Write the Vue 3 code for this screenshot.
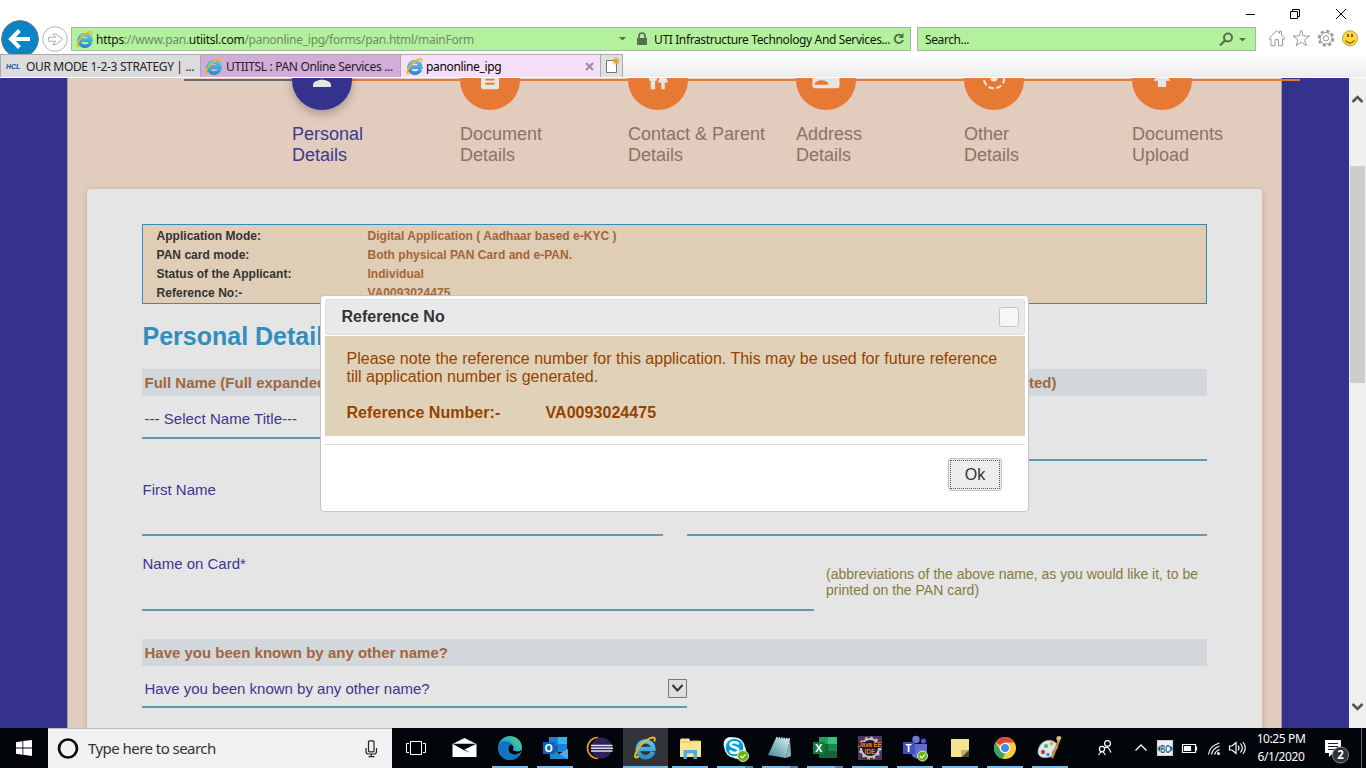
<script setup>
const steps = [
  { id: 'personal', lines: ['Personal', 'Details'], active: true },
  { id: 'document', lines: ['Document', 'Details'] },
  { id: 'contact', lines: ['Contact & Parent', 'Details'] },
  { id: 'address', lines: ['Address', 'Details'] },
  { id: 'other', lines: ['Other', 'Details'] },
  { id: 'upload', lines: ['Documents', 'Upload'] }
]
const summary = [
  ['Application Mode:', 'Digital Application ( Aadhaar based e-KYC )'],
  ['PAN card mode:', 'Both physical PAN Card and e-PAN.'],
  ['Status of the Applicant:', 'Individual'],
  ['Reference No:-', 'VA0093024475']
]
const tasks = [
  { id: 'mail' },
  { id: 'edge', run: true },
  { id: 'outlook', run: true },
  { id: 'eclipse' },
  { id: 'ie', run: true, active: true },
  { id: 'explorer', run: true },
  { id: 'skype', run: true, stack: true },
  { id: 'notepad', run: true, stack: true },
  { id: 'excel', run: true, stack: true },
  { id: 'java', run: true },
  { id: 'teams', run: true },
  { id: 'sticky', run: true },
  { id: 'chrome', run: true },
  { id: 'paint', run: true }
]
</script>

<template>
  <div class="screen">
    <svg class="defs" width="0" height="0">
      <defs>
        <linearGradient id="edgeg" x1="0" y1="1" x2="1" y2="0"><stop offset="0" stop-color="#0c5bb5" /><stop offset=".5" stop-color="#1fa3dc" /><stop offset="1" stop-color="#5fdc5a" /></linearGradient>
        <linearGradient id="noteg" x1="0" y1="1" x2="1" y2="0"><stop offset="0" stop-color="#3f8796" /><stop offset="1" stop-color="#d3f0f4" /></linearGradient>
        <linearGradient id="ieg" x1="0" y1="0" x2="0" y2="1"><stop offset="0" stop-color="#62c6ee" /><stop offset="1" stop-color="#2b8fcb" /></linearGradient>
        <symbol id="ie" viewBox="0 0 24 24">
          <path d="M20.3 16.2A8.2 8.2 0 1 1 20.8 13H6" fill="none" stroke="#2f86bd" stroke-width="4.800" />
          <path d="M20.3 16.2A8.2 8.2 0 1 1 20.8 13H6" fill="none" stroke="url(#ieg)" stroke-width="4" />
          <path d="M5.500 20.500C1.800 23.600 .6 21.500 2.500 17C5 11 11.500 4 17.500 1.700C22 0 23 1.700 21.700 5" fill="none" stroke="#f2b90f" stroke-width="2.100" />
        </symbol>
      </defs>
    </svg>

    <header class="browser">
      <div class="titlebar">
        <svg width="120" height="27" viewBox="1246 0 120 27" fill="none" stroke="#000" stroke-width="1">
          <path d="M1245 14.500h10M1290.500 11.500h7v7h-7zM1292.500 11.500v-2h7v7h-2M1336 9l10 10M1346 9l-10 10" />
        </svg>
      </div>
      <div class="nav">
        <svg class="navbtns" width="71" height="34" viewBox="0 20 71 34">
          <circle cx="20" cy="39" r="18.300" fill="#0a84c4" stroke="#5f6f78" />
          <path d="M30 39H12M19.500 30.500L11 39l8.500 8.500" fill="none" stroke="#fff" stroke-width="4" />
          <circle cx="55" cy="39" r="12.300" fill="#fff" stroke="#b4b4b4" />
          <path d="M48.500 37.200h7.300l-3-3.200h3.200l6.500 5.200-6.500 5.300h-3.200l3-3.300h-7.300z" fill="none" stroke="#b0b0b0" />
        </svg>
        <div class="address">
          <svg width="17" height="17"><use href="#ie" width="17" height="17" /></svg>
          <span class="url"><b>https</b>://www.pan.<b>utiitsl.com</b>/panonline_ipg/forms/pan.html/mainForm</span>
          <svg class="lock" width="34" height="20" viewBox="0 0 34 20" fill="#56704f">
            <path d="M1 8h7l-3.500 3.500zM19 9h10v7H19z" /><path d="M21 9V7a3 3 0 0 1 6 0v2" fill="none" stroke="#56704f" stroke-width="1.700" />
          </svg>
          <span class="cert">UTI Infrastructure Technology And Services...</span>
          <svg class="reload" width="12" height="14" viewBox="0 0 12 14"><path d="M9 4A4.200 4.200 0 1 0 10 8" fill="none" stroke="#56704f" stroke-width="2" /><path d="M10.500 .8v5.200H5.300z" fill="#56704f" /></svg>
        </div>
        <div class="search">
          <span>Search...</span>
          <svg width="30" height="18" viewBox="0 0 30 18"><circle cx="11" cy="7.500" r="4" fill="none" stroke="#56704f" stroke-width="2" /><path d="M8 10.500L3 15.500" stroke="#56704f" stroke-width="2.300" /><path d="M22 8h7l-3.500 3.500z" fill="#56704f" /></svg>
        </div>
        <svg class="tools" width="96" height="20" viewBox="1268 28 96 20" fill="none" stroke="#999" stroke-width="1">
          <path d="M1269 38.500l7.700-8 2.800 2.700v-2h2v4l3.500 3.300-1.400 1.200-1.100-1v7h-4v-6h-3.500v6h-4v-7l-1 1z" />
          <path d="M1301.300 30l2.100 5.900 6.100.1-4.900 3.800 1.800 5.900-5.100-3.500-5.100 3.500 1.800-5.900-4.900-3.800 6.100-.1z" />
          <circle cx="1326" cy="38.300" r="7.200" stroke-width="2.200" stroke-dasharray="3.200 2.450" /><circle cx="1326" cy="38.300" r="5.800" fill="#fff" /><circle cx="1326" cy="38.300" r="2.700" />
          <circle cx="1350" cy="38.300" r="7.500" fill="#ffd93b" stroke="#b79f52" /><path d="M1345.500 40.500q4.500 5 9 0" stroke="#8c6d15" stroke-width="1.300" /><path d="M1348 34v3M1352 34v3" stroke="#7b6013" stroke-width="2" />
        </svg>
      </div>
      <div class="tabs">
        <div class="tab first"><span class="hcl">HCL</span><span class="t1">OUR MODE 1-2-3 STRATEGY | ...</span></div>
        <div class="tab second"><svg width="17" height="17"><use href="#ie" width="17" height="17" /></svg><span class="t2">UTIITSL : PAN Online Services ...</span></div>
        <div class="tab current"><svg width="17" height="17"><use href="#ie" width="17" height="17" /></svg><span class="t3">panonline_ipg</span>
          <svg class="close" width="9" height="9" viewBox="0 0 9 9"><path d="M1 1l7 7M8 1L1 8" stroke="#9b8ca0" stroke-width="2" /></svg></div>
        <div class="tab new"><svg width="18" height="20" viewBox="0 0 18 20"><path d="M3.500 4.500h10v12h-10z" fill="#fff" stroke="#777" /><circle cx="13" cy="5" r="2.500" fill="#ffb52a" /><path d="M13 1v8M9 5h8M10.200 2.200l5.600 5.600M15.800 2.200l-5.600 5.600" stroke="#d99a2d" stroke-width=".9" /></svg></div>
      </div>
    </header>

    <main class="page">
      <section class="sheet">
        <div class="track"></div>
        <div class="steps">
          <div v-for="s in steps" :key="s.id" class="step" :class="{ active: s.active }">
            <svg width="60" height="60" viewBox="0 0 60 60">
              <circle class="disc" cx="30" cy="30" r="30" />
              <g fill="#e5e5e5" transform="translate(16.500 14.500) scale(1.125)">
                <path v-if="s.id === 'personal'" d="M12 12.300a4 4 0 1 0 0-8 4 4 0 0 0 0 8zm0 1.200c-2.700 0-8 1.500-8 4.500v2h16v-2c0-3-5.300-4.500-8-4.500z" />
                <path v-if="s.id === 'document'" d="M14 2H6a2 2 0 0 0-2 2v16c0 1.100.9 2 2 2h12a2 2 0 0 0 2-2V8zM16 18H8v-1.700h8zm0-3.700H8V12.600h8z" />
                <path v-if="s.id === 'contact'" d="M5.500 22v-7.500H4V9c0-1.100.9-2 2-2h3c1.100 0 2 .9 2 2v5.500H9.500V22zM18 22v-6h3l-2.540-7.630A2 2 0 0 0 16.560 7h-.12c-.86 0-1.630.55-1.900 1.370L12 16h3v6z" />
                <path v-if="s.id === 'address'" fill-rule="evenodd" d="M22 3H2a2 2 0 0 0-2 2v14c0 1.100.9 2 2 2h20a2 2 0 0 0 2-2V5a2 2 0 0 0-2-2zM2 18v-1c0-2 4-3.100 6-3.100s6 1.100 6 3.100v1zM14 6h8v6h-8z" />
                <g v-if="s.id === 'other'"><circle cx="12" cy="12" r="9.200" fill="none" stroke="#e5e5e5" stroke-width="1.800" stroke-dasharray="5 2.220" /><circle cx="12" cy="12" r="3.200" /></g>
                <path v-if="s.id === 'upload'" d="M8.300 20h7.400v-5.500h4L12 5.500 4.300 14.500h4z" />
              </g>
            </svg>
            <div class="caption"><div v-for="l in s.lines" :key="l">{{ l }}</div></div>
          </div>
        </div>

        <div class="card">
          <div class="summary">
            <div v-for="r in summary" :key="r[0]" class="row"><span>{{ r[0] }}</span><span class="val">{{ r[1] }}</span></div>
          </div>
          <h1>Personal Details</h1>
          <div class="band"><span class="spread"><span>Full Name (Full expanded name:</span><span>initials are not permitted)</span></span></div>
          <div class="pair r1"><div class="field title">--- Select Name Title---</div><div class="field"></div></div>
          <div class="pair r2"><div class="field">First Name</div><div class="field"></div></div>
          <div class="pair r3"><div class="field">Name on Card*</div><div class="hint">(abbreviations of the above name, as you would like it, to be<br>printed on the PAN card)</div></div>
          <div class="band known">Have you been known by any other name?</div>
          <div class="field drop"><span>Have you been known by any other name?</span>
            <svg width="19" height="19" viewBox="0 0 19 19"><path d="M.5.5h18v18H.5z" fill="#dedede" stroke="#777" /><path d="M4.500 6l5 5.500 5-5.500" fill="none" stroke="#333" stroke-width="2" /></svg>
          </div>
        </div>
      </section>

      <aside class="scroll">
        <svg width="17" height="88" viewBox="0 0 17 88"><path d="M3.500 24l5-5 5 5" fill="none" stroke="#555" stroke-width="2.600" /></svg>
        <div class="thumb"></div>
        <svg class="down" width="17" height="40" viewBox="0 0 17 40"><path d="M3.500 15l5 5 5-5" fill="none" stroke="#555" stroke-width="2.600" /></svg>
      </aside>

      <div class="dialog">
        <div class="dhead"><span>Reference No</span><i></i></div>
        <div class="dbody">
          <p>Please note the reference number for this application. This may be used for future reference<br>till application number is generated.</p>
          <p class="ref"><span>Reference Number:-</span><span>VA0093024475</span></p>
        </div>
        <div class="dfoot"><button><span>Ok</span></button></div>
      </div>
    </main>

    <footer class="taskbar">
      <div class="start"><svg width="16" height="16" viewBox="0 0 16 16" fill="#fff"><path d="M0 2.200L6.500 1.200V7.500H0zM7.300 1.100L16 0v7.500H7.300zM0 8.400h6.500v6.300L0 13.800zM7.300 8.400H16V16l-8.700-1.200z" /></svg></div>
      <div class="find">
        <svg width="22" height="22" viewBox="0 0 22 22"><circle cx="11" cy="10.500" r="9" fill="none" stroke="#0a0a0a" stroke-width="2.700" /></svg>
        <span>Type here to search</span>
        <svg width="13" height="18" viewBox="0 0 13 18" fill="none" stroke="#222" stroke-width="1.200"><rect x="3.500" y=".8" width="5.500" height="11" rx="1" /><path d="M1 8v3.500q0 2.500 2.500 2.500h5.500q2.500 0 2.500-2.500V8M6.300 14v2.500M3.500 16.700h6" /></svg>
      </div>
      <div class="view"><svg width="20" height="16" viewBox="0 0 20 16" fill="none" stroke="#fff"><path d="M4.500 1.500h11v13h-11zM3 3.500H.5v9H3M17 3.500h2.500v9H17" /></svg></div>
      <div v-for="t in tasks" :key="t.id" class="task" :class="{ run: t.run, active: t.active, stack: t.stack }">
        <svg width="36" height="38" viewBox="0 0 36 38">
          <g v-if="t.id === 'mail'" transform="translate(-.5 0)"><path d="M6 16L18 10l12 6v13H6z" fill="#fff" /><path d="M6 15.800h24L18 21.500l5.500 3.200L17 22z" fill="#03060b" /></g>
          <g v-if="t.id === 'edge'"><circle cx="18" cy="20" r="12" fill="url(#edgeg)" /><path d="M6.200 18C9 11 20 12 21 19c-3-2-6 0-6 3 0 5 7 7 13 4C24 34 10 35 6.500 23z" fill="#1471c4" /><path d="M19 16.500c4 2 2 4 2 5.500 2 2 7 2 9-.5-1 4-4 5-7 5.200-5-.7-7-2.500-6.500-6 .2-2 .5-3.600 2.500-4.200z" fill="#03060b" /></g>
          <g v-if="t.id === 'outlook'"><path d="M12 9h18v15H12z" fill="#1a83d2" /><path d="M21 9h9v7h-9z" fill="#35b3ef" /><path d="M12 17h9v8h-9z" fill="#1263af" /><path d="M13 31V21l9 5 9-5v10z" fill="#4aaee8" /><path d="M13 21l18 10H13z" fill="#2287d2" /><path d="M6 14h12v12H6z" fill="#0c62b9" /><text x="7.500" y="24" fill="#fff" class="glyph">O</text></g>
          <g v-if="t.id === 'eclipse'"><path d="M16 9.500a10.500 10.500 0 0 0 0 21" fill="none" stroke="#ef9127" stroke-width="1.700" /><circle cx="19.500" cy="20" r="10.500" fill="#2e2358" /><path d="M9 17.500h21.500M9 20.200h22M9 22.900h21.500" stroke="#e6e3ee" stroke-width="1.500" /></g>
          <g v-if="t.id === 'ie'"><use href="#ie" x="6.500" y="8" width="23" height="24" /></g>
          <g v-if="t.id === 'explorer'"><path d="M8 12l1-1.500h8l1.500 2.500H29v16H8z" fill="#ffe391" /><path d="M8 14h11M20 13h8" stroke="#efbd4a" stroke-width="1" /><path d="M11.500 22h13.500v9h-3.500v-5.500h-6.500V31h-3.500z" fill="#45afe2" /></g>
          <g v-if="t.id === 'skype'"><circle cx="13.500" cy="16" r="7" fill="#e9f8ff" /><circle cx="21" cy="23" r="8" fill="#e9f8ff" /><circle cx="17.500" cy="19.500" r="9.500" fill="#009edb" stroke="#e9f8ff" stroke-width="1.400" /><path d="M21.500 16.500c-1-3-8-3-8 0 0 3.500 8 2 8 5.800 0 3.500-7.500 3.500-8.500 0" fill="none" stroke="#fff" stroke-width="2.500" /><circle cx="26" cy="28" r="5.500" fill="#6bb112" stroke="#d9ecc4" /><path d="M23.500 28l1.800 1.900 3.200-3.500" fill="none" stroke="#fff" stroke-width="1.300" /></g>
          <g v-if="t.id === 'notepad'"><path d="M14 10l14 1-4 19-18-3z" fill="url(#noteg)" /><path d="M28 11l1 17-5 2z" fill="#96b0b5" /><path d="M14 10l14 1" stroke="#c9d4d4" stroke-width="2" stroke-dasharray="1.500 1" /></g>
          <g v-if="t.id === 'excel'"><path d="M12 9h18v21H12z" fill="#18894c" /><path d="M12 9h9v7h-9z" fill="#20a063" /><path d="M21 9h9v7h-9z" fill="#34c381" /><path d="M21 23h9v7h-9zM12 16h9v14h-9z" fill="#17613b" /><path d="M6 14h12v12H6z" fill="#127a43" /><text x="8.300" y="24.300" fill="#fff" class="glyph">X</text></g>
          <g v-if="t.id === 'java'"><path d="M6 8h24v24H6z" fill="#51345f" /><circle cx="18" cy="20" r="9" fill="#231b22" stroke="#c8c8c8" stroke-width="2" /><circle cx="18" cy="20" r="10.500" fill="none" stroke="#c8c8c8" stroke-width="1.800" stroke-dasharray="2.500 3" /><path d="M7 14h22v6H7z" fill="#231b22" /><text x="6.500" y="19.300" class="java" textLength="23" lengthAdjust="spacingAndGlyphs">Java EE</text><text x="12.500" y="25.800" class="java" textLength="11" lengthAdjust="spacingAndGlyphs">IDE</text></g>
          <g v-if="t.id === 'teams'"><circle cx="19" cy="11.500" r="3.700" fill="#6f78d8" /><circle cx="26.500" cy="13" r="2.600" fill="#5059c9" /><path d="M14 16h16v9q-1 4-5 4-3 3-7 1-4-2-4-6z" fill="#626bd0" /><path d="M6 14h12v12H6z" fill="#454fb8" /><text x="8.500" y="24.300" fill="#fff" class="glyph">T</text><circle cx="25.500" cy="28" r="5" fill="#6bb112" stroke="#d9ecc4" /><path d="M23 28l1.800 1.900 3.200-3.500" fill="none" stroke="#fff" stroke-width="1.300" /></g>
          <g v-if="t.id === 'sticky'"><path d="M9 11h18v11l-7 7H9z" fill="#f2e58f" /><path d="M27 21.500V29h-7.500z" fill="#4b4734" /><path d="M19 22h8l-7.500 7z" fill="#bdb168" /></g>
          <g v-if="t.id === 'chrome'"><circle cx="18" cy="20" r="11" fill="#f7cd38" /><path d="M18 20L8.500 14.500A11 11 0 0 1 27.500 14.500H18z" fill="#db4a3a" /><path d="M8.500 14.500L13.500 23l4.500 3-2.500 4.700A11 11 0 0 1 8.500 14.500z" fill="#36a65b" /><circle cx="18" cy="20" r="5.300" fill="#fff" /><circle cx="18" cy="20" r="4" fill="#4688f1" /></g>
          <g v-if="t.id === 'paint'"><path d="M6 24c0-8 8-14 15-11 6 3 6 8 2 9-3 1-3 3-2 5-4 4-15 4-15-3z" fill="#d5e9f3" stroke="#8eb4c8" stroke-width=".6" /><circle cx="11" cy="24" r="2.200" fill="#d43c31" /><circle cx="14" cy="18" r="2" fill="#56b13e" /><circle cx="19.500" cy="15.500" r="2" fill="#e8b42e" /><circle cx="16" cy="26.500" r="1.700" fill="#3f82d4" /><path d="M27 12l-7 18" stroke="#cc8a38" stroke-width="2.500" /><path d="M24.500 9q3-2 5 .5l-2 4-3-1.500z" fill="#dbb987" /></g>
        </svg>
      </div>
      <div class="tray">
        <svg width="162" height="40" viewBox="1090 728 162 40" fill="none" stroke="#fff" stroke-width="1.200">
          <circle cx="1107.500" cy="743.500" r="2.900" /><circle cx="1102" cy="749" r="2.600" /><path d="M1105 748q3-3 6 4.500M1098.500 755q3.500-6.500 7 0" />
          <path d="M1135.500 750.500l5.500-5.500 5.500 5.500" stroke-width="1.400" />
          <path d="M1157.500 740.500h15v15h-15z" fill="#f0f0f0" stroke="#ccc" />
          <text x="1160.500" y="753" class="abc" textLength="9.500" lengthAdjust="spacingAndGlyphs">BC</text><path d="M1160 746l-2 2.700 2 2.700zM1170.500 746l2 2.700-2 2.700z" stroke="#176487" stroke-width=".8" fill="#176487" />
          <path d="M1182.500 744.500h13v8h-13zM1196.500 746.500v4" /><path d="M1184.500 746.500h6v4h-6z" fill="#fff" />
          <path d="M1208.500 754.500q1-8.500 11-11.500M1211.500 754.500q1-6 8-8.500M1214.500 754.500q1-3.500 5-5" /><circle cx="1218.500" cy="753.500" r="1.500" fill="#fff" stroke="none" />
          <path d="M1229.500 746h2.500l4-3.500v11l-4-3.500h-2.500zM1238 745.500q2 2.500 0 5M1240.500 743.500q3.500 4.500 0 9M1243 742q4.500 6 0 12" />
        </svg>
        <div class="clock"><span class="tm">10:25 PM</span><span class="dt">6/1/2020</span></div>
        <svg width="56" height="40" viewBox="1310 728 56 40"><path d="M1325 740h16v13h-8l-4 4v-4h-4z" fill="#fff" /><path d="M1328 743.500h10M1328 746.500h10M1328 749.500h7" stroke="#222" /><circle cx="1340.500" cy="755" r="8" fill="#303134" stroke="#8a8a8a" /><text x="1337.300" y="759.300" class="badge">2</text><path d="M1361.500 728v40" stroke="#666" /></svg>
      </div>
    </footer>
  </div>
</template>

<style>
body { margin: 0; overflow: hidden; }
</style>
<style scoped>
.screen { width: 1366px; height: 768px; display: grid; grid-template-rows: 78px 650px 40px; overflow: hidden; font-family: "Liberation Sans", Arial, sans-serif; position: relative; background: #fff; }
.defs { position: absolute; }
svg { display: block; flex: none; }
span { white-space: nowrap; }
.browser { display: grid; grid-template-rows: 27px 27px 24px; font-family: "Noto Sans", sans-serif; font-size: 12px; background: #fff; min-width: 0; }
.titlebar { display: flex; justify-content: flex-end; }
.nav { display: flex; align-items: flex-start; min-width: 0; }
.navbtns { margin-top: -7px; }
.address, .search { box-sizing: border-box; height: 24px; border: 1px solid #aab3a8; background: #b3f19d; display: flex; align-items: center; }
.address { width: 840px; padding-left: 4px; }
.url { color: #6f8a68; margin-left: 3px; width: 522px; letter-spacing: -0.27px; }
.url b { font-weight: 400; color: #101510; }
.cert { margin-left: 2px; width: 236px; color: #101510; letter-spacing: -0.37px; }
.reload { margin-left: 3px; }
.search { width: 339px; margin-left: 6px; padding: 0 8px 0 7px; justify-content: space-between; color: #101510; letter-spacing: -.4px; }
.tools { margin: 1px 0 0 12px; }
.tabs { display: flex; background: linear-gradient(#fff, #ececec); border-bottom: 1px solid #fff; box-sizing: border-box; }
.tab { box-sizing: border-box; border-top: 1px solid #aaa; border-left: 1px solid #aaa; height: 23px; display: flex; align-items: center; color: #222; }
.first { width: 200px; background: #dcdcdc; padding-left: 5px; }
.hcl { font: italic bold 7px "Liberation Sans", sans-serif; color: #1b55a0; width: 20px; }
.second { width: 200px; background: #d4acda; padding-left: 4px; gap: 4px; }
.current { width: 200px; background: #f6dff9; padding-left: 5px; gap: 3px; color: #000; }
.close { margin: 0 6px 0 auto; }
.new { width: 23px; background: #e0e0e0; border-right: 1px solid #aaa; padding-left: 2px; }
.t1, .t2 { letter-spacing: -.34px; }
.t3 { letter-spacing: -.35px; }
.page { position: relative; display: flex; overflow: hidden; background: #34328d; }
.sheet { position: relative; box-sizing: border-box; margin-left: 67px; width: 1215px; height: 650px; background: #e2ccbe; border-left: 1px solid #a399a8; border-right: 1px solid #a399a8; }
.track { position: absolute; top: 1px; left: 116px; width: 1116px; height: 2px; background: linear-gradient(90deg, #6b6870 108px, #e67a34 108px); }
.steps { position: relative; display: flex; margin-top: -28px; padding-left: 224px; height: 139px; }
.step { flex: none; width: 168px; color: #8b7265; font-size: 18px; line-height: 21px; }
.step:last-child { width: 120px; }
.step svg { overflow: visible; }
.disc { fill: #e67a34; }
.active .disc { fill: #34328d; filter: drop-shadow(0 4px 5px rgba(0,0,0,.25)); }
.step.active { color: #3c3990; }
.caption { margin-top: 14px; white-space: nowrap; }
.card { box-sizing: border-box; margin: 0 19px; height: 560px; border-radius: 4px; background: #e5e5e5; padding: 35px 55px 0; box-shadow: 0 1px 6px rgba(90,60,30,.22); }
.summary { box-sizing: border-box; height: 80px; border: 1px solid #318fbe; background: #dfcdb5; padding: 2px 0 0 13.5px; font-size: 12px; font-weight: bold; color: #333; line-height: 19px; letter-spacing: .03px; }
.row { display: grid; grid-template-columns: 211px 1fr; }
.val { color: #a4653a; }
h1 { margin: 17px 0 18px; padding-left: .5px; font-size: 25px; line-height: 30px; color: #318fbe; white-space: nowrap; }
.band { height: 27px; background: #d1d7da; padding-left: 2.5px; font-size: 15px; line-height: 28px; font-weight: bold; color: #a4653a; }
.spread { display: flex; justify-content: space-between; width: 912px; }
.pair { display: grid; grid-template-columns: 521px 520px; gap: 24px; }
.field { box-sizing: border-box; border-bottom: 2px solid #5f9aae; font-size: 15px; line-height: 18px; color: #3a3791; padding-left: .5px; }
.r1 { height: 65px; }
.title { height: 43px; padding: 14px 0 0 2.5px; letter-spacing: .04px; }
.r2 { height: 75px; }
.r2 .field { padding-top: 20px; }
.r3 { height: 75px; grid-template-columns: 672px 1fr; gap: 12px; }
.r3 .field { padding-top: 19px; }
.hint { padding-top: 30px; font-size: 14px; line-height: 16px; color: #857b3c; white-space: nowrap; }
.known { margin-top: 28px; }
.drop { width: 545px; height: 42px; display: flex; align-items: center; justify-content: space-between; padding: 5px 0 0 2.5px; }
.scroll { margin-left: auto; width: 17px; background: #f0f0f0; display: flex; flex-direction: column; }
.thumb { height: 217px; margin: 0 1px; background: #cdcdcd; }
.down { margin-top: auto; margin-bottom: -1px; }
.dialog { position: absolute; left: 320px; top: 217px; width: 709px; height: 217px; box-sizing: border-box; background: #fff; border: 1px solid #c5c5c5; border-radius: 4px; padding: 3px 3px 0 4px; color: #333; }
.dhead { box-sizing: border-box; height: 36px; margin-bottom: 1px; border: 1px solid #ddd; border-radius: 3px; background: #e9e9e9; display: flex; align-items: center; justify-content: space-between; padding: 0 5px 1px 15.5px; font-weight: bold; font-size: 16px; }
.dhead i { box-sizing: border-box; width: 20px; height: 20px; background: #f6f6f6; border: 1px solid #c5c5c5; border-radius: 3px; }
.dbody { box-sizing: border-box; height: 100px; background: #e0d2b8; padding: 14px 0 0 21.5px; color: #964200; font-size: 16px; line-height: 18px; white-space: nowrap; width: 700px; }
.dbody p { margin: 0; }
.dbody .ref { margin-top: 18px; font-weight: bold; display: grid; grid-template-columns: 199px 1fr; letter-spacing: .05px; }
.dfoot { width: 700px; box-sizing: border-box; margin-top: 8px; border-top: 1px solid #ddd; padding: 13px 23px 0 0; display: flex; justify-content: flex-end; }
.dfoot button { box-sizing: border-box; width: 54px; height: 33px; border: 1px solid #c5c5c5; border-radius: 3px; background: #ededed; padding: 1px; font: 16px "Liberation Sans", sans-serif; color: #333; }
.dfoot button span { display: block; box-sizing: border-box; height: 29px; border: 1px dotted #555; line-height: 27px; }
.taskbar { display: flex; background: #02050a; font-family: "Noto Sans", sans-serif; }
.start { width: 48px; display: flex; align-items: center; justify-content: center; }
.find { box-sizing: border-box; width: 344px; background: #f1f1f1; border-top: 1px solid #bbb; display: flex; align-items: center; padding: 0 14px 0 9px; font-size: 15px; color: #333; }
.find span { margin: -2px auto 0 9px; letter-spacing: -.55px; }
.view { width: 51px; display: flex; align-items: center; padding-left: 14px; box-sizing: border-box; }
.task { width: 45px; box-sizing: border-box; padding: 0 5px 0 4px; }
.run::after { content: ""; display: block; height: 2px; background: #76b9ed; }
.stack::after { background: linear-gradient(90deg, #76b9ed 28px, #5583aa 28px); }
.task.active { background: #323439; }
.active::after { margin: 0 -5px 0 -4px; }
.glyph { font: bold 10.500px "Open Sans", sans-serif; }
.java { font: bold 7.500px "Liberation Sans", sans-serif; fill: #f08127; }
.tray { margin-left: auto; display: flex; }
.abc { font: bold 11px "Liberation Sans", sans-serif; fill: #176487; stroke: none; }
.badge { font: bold 11.500px "Noto Sans", sans-serif; fill: #fff; }
.clock { width: 58px; color: #fff; font-size: 12px; line-height: 18px; display: flex; flex-direction: column; align-items: center; padding-top: 2px; letter-spacing: -.4px; }
</style>
